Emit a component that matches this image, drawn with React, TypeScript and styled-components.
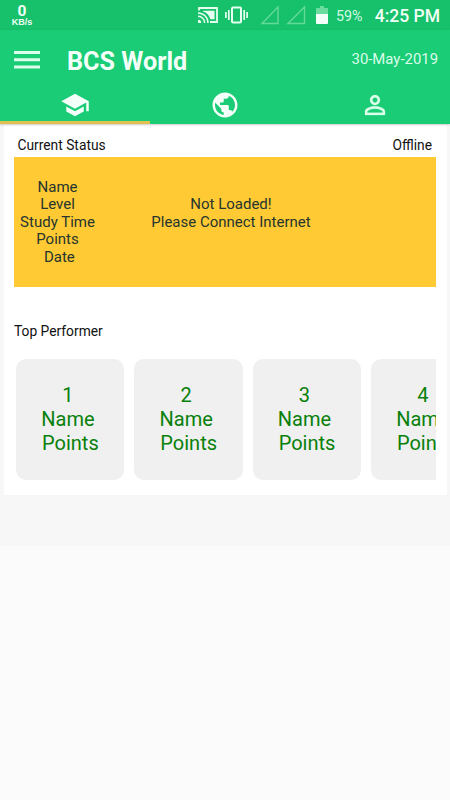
import React from "react";
import styled, { createGlobalStyle } from "styled-components";

const GlobalStyle = createGlobalStyle`
  * { box-sizing: border-box; }
  body { margin: 0; background: #fbfbfb; font-family: Roboto, "Liberation Sans", sans-serif; }
`;

const Screen = styled.div`
  width: 450px;
  height: 800px;
  overflow: hidden;
  background: #fbfbfb;
`;

const StatusBar = styled.div`
  display: flex;
  justify-content: space-between;
  height: 30px;
  padding: 0 10px 0 11px;
  background: #17c06b;
  color: #f1fff6;
`;

const NetSpeed = styled.div`
  display: flex;
  flex-direction: column;
  align-items: center;
  width: 22px;
  padding-top: 4px;
  font-weight: 700;
`;

const SpeedValue = styled.span`
  font-size: 15.5px;
  line-height: 14px;
`;

const SpeedUnit = styled.span`
  font-family: "Liberation Sans", sans-serif;
  font-size: 9px;
  line-height: 9px;
  white-space: nowrap;
`;

const StatusIcons = styled.div`
  display: flex;
  align-items: center;
`;

const StatusIcon = styled.svg<{ $gap: number }>`
  display: block;
  flex: none;
  margin-right: ${(p) => p.$gap}px;
`;

const Battery = styled.span`
  width: 28px;
  padding-top: 1px;
  font-size: 14.3px;
  color: #d2fae3;
  white-space: nowrap;
`;

const Clock = styled.span`
  width: 66px;
  margin-left: 10px;
  padding-top: 2px;
  font-size: 17.5px;
  font-weight: 500;
  text-align: right;
  white-space: nowrap;
`;

const Header = styled.header`
  height: 94px;
  background: #19cc75;
  box-shadow: 0 1px 2px rgba(0, 0, 0, 0.18);
  position: relative;
`;

const Toolbar = styled.div`
  display: flex;
  align-items: center;
  height: 60px;
  padding: 0 12px 0 14px;
`;

const Menu = styled.svg`
  display: block;
  flex: none;
`;

const Title = styled.h1`
  flex: 1;
  margin: 3px 0 0 27px;
  font-size: 25.2px;
  font-weight: 700;
  line-height: 30px;
  color: #f3fff8;
`;

const Today = styled.span`
  margin-top: -3px;
  font-size: 14.9px;
  color: #dbfcea;
`;

const Tabs = styled.nav`
  display: grid;
  grid-template-columns: repeat(3, 1fr);
  height: 34px;
`;

const Tab = styled.div<{ $active?: boolean }>`
  display: flex;
  justify-content: center;
  height: 34px;
  border-bottom: 3px solid ${(p) => (p.$active ? "#dfc050" : "transparent")};
`;

const TabIcon = styled.svg<{ $muted?: boolean }>`
  display: block;
  flex: none;
  width: 30px;
  height: 30px;
  fill: ${(p) => (p.$muted ? "#dcffec" : "#f3fff8")};
  stroke: ${(p) => (p.$muted ? "#dcffec" : "none")};
  stroke-width: 0.2;
`;

const Page = styled.main`
  height: 422px;
  padding: 1px 3px 0 4px;
  background: #f7f7f7;
`;

const Panel = styled.section`
  height: 370px;
  padding: 0 11px 0 10px;
  background: #fff;
  color: #111;
`;

const StatusRow = styled.div`
  display: flex;
  justify-content: space-between;
  height: 32px;
  padding: 11px 4px 0 3.5px;
  font-size: 13.8px;
  line-height: 18px;
`;

const StatusCard = styled.div`
  display: flex;
  height: 130px;
  padding-top: 21.8px;
  background: #ffca33;
  color: #26352f;
  font-size: 15px;
  line-height: 17.5px;
  text-align: center;
`;

const Labels = styled.div`
  display: flex;
  flex-direction: column;
  width: 87px;
  white-space: pre;
`;

const Message = styled.div`
  width: 260px;
  padding-top: 17.5px;
`;

const SectionTitle = styled.h2`
  margin: 35px 0 19px;
  font-size: 13.8px;
  font-weight: 400;
  line-height: 18px;
`;

const Performers = styled.div`
  display: flex;
  gap: 10px;
  padding-left: 2px;
  overflow: hidden;
`;

const PerformerCard = styled.article`
  flex: none;
  width: 108.3px;
  height: 121px;
  padding-top: 25.4px;
  border-radius: 10px;
  background: #f0f0f0;
  color: #08800a;
  font-size: 20px;
  line-height: 23.9px;
  text-align: center;
`;

const CardLine = styled.div<{ $shift?: number }>`
  padding-left: ${(p) => p.$shift ?? 0}px;
  padding-right: ${(p) => 4.5 - (p.$shift ?? 0)}px;
`;

const labels = ["Name", "Level", "Study Time", "Points", " Date"];
const ranks = [1, 2, 3, 4];

function StatusArea() {
  return (
    <StatusBar>
      <NetSpeed>
        <SpeedValue>0</SpeedValue>
        <SpeedUnit>KB/s</SpeedUnit>
      </NetSpeed>
      <StatusIcons>
        <StatusIcon $gap={7} width="20" height="18" viewBox="0 0 20 18" fill="none" stroke="#e5fff0">
          <path d="M1 4.500V2h18v14h-7" strokeWidth="1.800" />
          <path d="M5 4.800h11.500v8.500h-4Q10.500 7 5 5.500Z" fill="#e5fff0" stroke="none" />
          <path d="M0 6.900a10 10 0 0 1 10 10M0 10.200a6.700 6.700 0 0 1 6.700 6.700" strokeWidth="1.500" />
          <path d="M0 13.700a3.300 3.300 0 0 1 3.300 3.300H0Z" fill="#e5fff0" stroke="none" />
        </StatusIcon>
        <StatusIcon $gap={12} width="23" height="18" viewBox="0 0 23 18" fill="none" stroke="#e5fff0" strokeWidth="2">
          <rect x="7" y="1.500" width="9" height="15" rx="1" />
          <path d="M3.800 4v10M.900 6v6M19.200 4v10M22.100 6v6" strokeWidth="1.700" />
        </StatusIcon>
        <StatusIcon $gap={7} width="19" height="20" viewBox="0 0 19 20" fill="none" stroke="#63d99a">
          <path d="M18 2v16.500H2Z" strokeWidth="1.400" />
        </StatusIcon>
        <StatusIcon $gap={10} width="20" height="20" viewBox="0 0 20 20" fill="none" stroke="#63d99a">
          <path d="M18.500 2v16.500H2Z" strokeWidth="1.400" />
        </StatusIcon>
        <StatusIcon $gap={8} width="12" height="18" viewBox="0 0 12 18">
          <path d="M4 0h4v2h3q1 0 1 1v6H0V3q0-1 1-1h3Z" fill="#6ddca1" />
          <path d="M0 8h12v9q0 1-1 1H1q-1 0-1-1Z" fill="#f5fff9" />
        </StatusIcon>
        <Battery>59%</Battery>
        <Clock>4:25 PM</Clock>
      </StatusIcons>
    </StatusBar>
  );
}

export default function App() {
  return (
    <>
      <GlobalStyle />
      <Screen>
        <StatusArea />
        <Header>
          <Toolbar>
            <Menu width="26" height="18" viewBox="0 0 26 18" fill="#dcfeea">
              <path d="M0 0h26v3H0ZM0 7.200h26v3H0ZM0 14.400h26v3H0Z" />
            </Menu>
            <Title>BCS World</Title>
            <Today>30-May-2019</Today>
          </Toolbar>
          <Tabs>
            <Tab $active>
              <TabIcon viewBox="0 0 24 24">
                <path d="M5 13.180v4L12 21l7-3.820v-4L12 17l-7-3.820zM12 3L1 9l11 6 9-4.910V17h2V9L12 3z" />
              </TabIcon>
            </Tab>
            <Tab>
              <TabIcon viewBox="0 0 24 24">
                <path d="M12 2C6.480 2 2 6.480 2 12s4.480 10 10 10 10-4.480 10-10S17.520 2 12 2zm-1 17.930c-3.950-.49-7-3.850-7-7.930 0-.62.08-1.210.21-1.790L9 15v1c0 1.100.9 2 2 2v1.930zm6.900-2.540c-.26-.81-1-1.390-1.900-1.390h-1v-3c0-.55-.45-1-1-1H8v-2h2c.55 0 1-.45 1-1V7h2c1.100 0 2-.9 2-2v-.41c2.930 1.190 5 4.060 5 7.410 0 2.080-.8 3.970-2.100 5.390z" />
              </TabIcon>
            </Tab>
            <Tab>
              <TabIcon $muted viewBox="0 0 24 24">
                <path d="M12 5.900c1.160 0 2.100.94 2.100 2.100s-.94 2.100-2.100 2.100S9.900 9.160 9.900 8s.94-2.100 2.100-2.100m0 9c2.970 0 6.100 1.460 6.100 2.100v1.100H5.900V17c0-.64 3.130-2.100 6.100-2.100M12 4C9.790 4 8 5.790 8 8s1.790 4 4 4 4-1.790 4-4-1.790-4-4-4zm0 9c-2.670 0-8 1.340-8 4v3h16v-3c0-2.660-5.330-4-8-4z" />
              </TabIcon>
            </Tab>
          </Tabs>
        </Header>
        <Page>
          <Panel>
            <StatusRow>
              <span>Current Status</span>
              <span>Offline</span>
            </StatusRow>
            <StatusCard>
              <Labels>
                {labels.map((label) => (
                  <span key={label}>{label}</span>
                ))}
              </Labels>
              <Message>
                Not Loaded!
                <br />
                Please Connect Internet
              </Message>
            </StatusCard>
            <SectionTitle>Top Performer</SectionTitle>
            <Performers>
              {ranks.map((rank) => (
                <PerformerCard key={rank}>
                  <CardLine>{rank}</CardLine>
                  <CardLine>Name</CardLine>
                  <CardLine $shift={2.5}>Points</CardLine>
                </PerformerCard>
              ))}
            </Performers>
          </Panel>
        </Page>
      </Screen>
    </>
  );
}
